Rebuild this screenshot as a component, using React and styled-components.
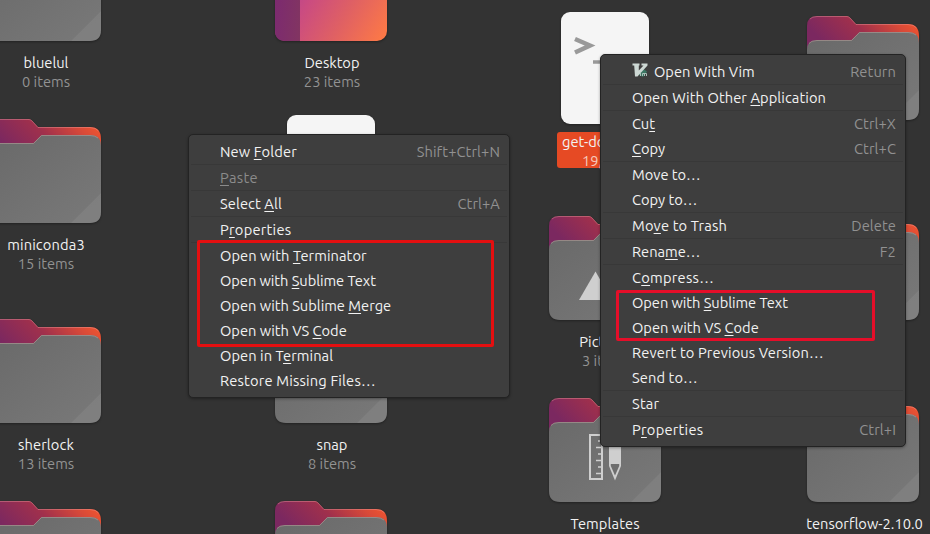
import React, { useId } from "react";
import styled, { createGlobalStyle } from "styled-components";

const GlobalStyle = createGlobalStyle`
  * { box-sizing: border-box; }
  html, body { margin: 0; background: #333333; overflow: hidden; }
`;

const Screen = styled.div`
  position: relative;
  display: flex;
  gap: 2px;
  width: 930px;
  height: 534px;
  overflow: hidden;
  background: #333333;
  font-family: Ubuntu, "Noto Sans", "Open Sans", sans-serif;
  font-size: 14.667px;
  line-height: 19px;
  color: #f2f2f2;
`;

const Pane = styled.div`
  flex: none;
  display: grid;
  grid-template-columns: repeat(2, ${(p) => p.$column}px);
  grid-template-rows: ${(p) => p.$rows};
  margin-left: ${(p) => p.$left || 0}px;
  margin-top: ${(p) => p.$top}px;
`;

const Cell = styled.div`
  display: flex;
  flex-direction: column;
  align-items: center;
`;

const Art = styled.svg`
  flex: none;
  display: block;
  width: 112px;
  height: 112px;
  overflow: visible;
  filter: drop-shadow(0 1px 1px rgba(0, 0, 0, 0.35));
`;

const Caption = styled.div`
  display: flex;
  flex-direction: column;
  align-items: center;
  height: 36px;
  margin-top: 8px;
  padding-left: ${(p) => p.$indent || 0}px;
  white-space: nowrap;
`;

const SelectedCaption = styled(Caption)`
  align-items: flex-start;
  width: 96px;
  padding: 0 0 0 5px;
  border-radius: 3px;
  background: #e64a24;
`;

const Name = styled.span`
  letter-spacing: ${(p) => p.$track || 0}px;
`;

const Detail = styled.span`
  color: #929292;

  ${SelectedCaption} & {
    padding-left: 20px;
    color: #f6cabd;
  }
`;

const Menu = styled.div`
  position: absolute;
  left: ${(p) => p.$x}px;
  top: ${(p) => p.$y}px;
  width: ${(p) => p.$width}px;
  padding: 4px 0;
  border: 1px solid #232323;
  border-radius: 5px;
  background: #3e3e3e;
  box-shadow: 0 1px 3px rgba(0, 0, 0, 0.35);
`;

const MenuRow = styled.div`
  display: flex;
  align-items: center;
  height: 25px;
  padding: 0 9px 0 31px;
  white-space: nowrap;
  color: ${(p) => (p.$disabled ? "#8b8b8b" : "#f2f2f2")};
`;

const Label = styled.span`
  letter-spacing: ${(p) => p.$track || 0}px;
`;

const Mnemonic = styled.span`
  text-decoration: underline;
  text-decoration-thickness: 1px;
  text-underline-offset: 2px;
  text-decoration-skip-ink: none;
`;

const Shortcut = styled.span`
  margin-left: auto;
  color: #919191;
  letter-spacing: 0.1px;
`;

const Separator = styled.div`
  height: 1px;
  margin: 0 2px;
  background: #383838;
`;

const Highlight = styled.div`
  position: absolute;
  left: ${(p) => p.$x}px;
  top: ${(p) => p.$y}px;
  width: ${(p) => p.$width}px;
  height: ${(p) => p.$height}px;
  border: 3px solid ${(p) => p.$color};
  border-radius: 2px;
`;

const VimMark = styled.svg`
  width: 16px;
  height: 16px;
  margin: -1px 6px 0 0;
`;

function Folder({ children }) {
  const id = useId();
  return (
    <Art viewBox="0 0 112 112">
      <defs>
        <linearGradient id={id + "b"} x1="0" y1="0.3" x2="1" y2="0">
          <stop offset="0" stopColor="#7b2860" />
          <stop offset="0.42" stopColor="#a0304c" />
          <stop offset="0.75" stopColor="#d94a38" />
          <stop offset="1" stopColor="#fa5a2c" />
        </linearGradient>
        <linearGradient id={id + "f"} x1="0" y1="0" x2="1" y2="1">
          <stop offset="0" stopColor="#696969" />
          <stop offset="1" stopColor="#797979" />
        </linearGradient>
      </defs>
      <path d="M0 38V14Q0 4 10 4H40Q41.500 4 43 5.500L49 12H101Q112 12 112 24V38Z" fill={`url(#${id}b)`} />
      <path d="M3 7Q5 4.500 10 4.500H40Q41.500 4.500 43 6L49 12.500H101Q107 12.500 109.500 16" fill="none" stroke="#f0a0a0" strokeOpacity=".4" />
      <path d="M0 38Q0 28 10 28H44.500L52.500 20H101Q112 20 112 31V97Q112 108 101 108H11Q0 108 0 97Z" fill={`url(#${id}f)`} />
      <path d="M2 31.500Q4 28.500 10 28.500H44.500L52.500 20.500H101Q106 20.500 109 23" fill="none" stroke="#c0a5a0" strokeOpacity=".5" />
      <path d="M82 108L112 78V97Q112 108 101 108Z" fill="#fff" fillOpacity=".06" />
      {children}
    </Art>
  );
}

function DesktopIcon() {
  const id = useId();
  return (
    <Art viewBox="0 0 112 112">
      <defs>
        <linearGradient id={id} x1="0" y1="0.35" x2="1" y2="0.9">
          <stop offset="0" stopColor="#a63b9b" />
          <stop offset="0.35" stopColor="#cb4c80" />
          <stop offset="0.65" stopColor="#df6064" />
          <stop offset="1" stopColor="#fc7847" />
        </linearGradient>
        <linearGradient id={id + "s"} x1="0" y1="0.6" x2="1" y2="1">
          <stop offset="0" stopColor="#7c2a70" />
          <stop offset="1" stopColor="#823561" />
        </linearGradient>
      </defs>
      <rect y="4" width="112" height="104" rx="10" fill={`url(#${id})`} />
      <path d="M25 4V108H10Q0 108 0 97V14Q0 4 10 4Z" fill={`url(#${id}s)`} />
    </Art>
  );
}

function FileIcon({ prompt }) {
  return (
    <Art viewBox="0 0 112 112">
      <rect x="12" width="88" height="112" rx="9" fill="#f5f5f5" />
      {prompt && (
        <g fill="none" stroke="#999" strokeWidth="4.500">
          <path d="M26 27L41 33.500L26 40.500" />
          <path d="M44 50H60" strokeWidth="3.500" />
        </g>
      )}
    </Art>
  );
}

const TemplatesGlyph = () => (
  <g>
    <path d="M41 41H53V85H41Z" fill="none" stroke="#cfcfcf" strokeWidth="2" />
    <path d="M49 47H53M47 53.500H53M49 60H53M47 66.500H53M49 73H53M47 79.500H53" stroke="#cfcfcf" strokeWidth="1.500" />
    <path d="M60 45Q60 39 66 39Q72 39 72 45V72L66 86.500L60 72Z" fill="#cfcfcf" />
    <path d="M61.800 70H70.200V72L66 81.500L61.800 72Z" fill="#6e6e6e" />
  </g>
);

const ICONS = {
  folder: () => <Folder />,
  desktop: () => <DesktopIcon />,
  file: () => <FileIcon />,
  script: () => <FileIcon prompt />,
  pictures: () => (
    <Folder>
      <path d="M30 88L46.500 59.500L63 88Z" fill="#cfcfcf" />
    </Folder>
  ),
  templates: () => (
    <Folder>
      <TemplatesGlyph />
    </Folder>
  ),
};

const HOME = [
  { icon: "folder", name: "bluelul", detail: "0 items" },
  { icon: "desktop", name: "Desktop", detail: "23 items" },
  { icon: "folder", name: "miniconda3", detail: "15 items", track: 0.15 },
  { icon: "file" },
  { icon: "folder", name: "sherlock", detail: "13 items", track: 0.1 },
  { icon: "folder", name: "snap", detail: "8 items" },
  { icon: "folder" },
  { icon: "folder" },
];

const FILES = [
  { icon: "script", name: "get-do", detail: "19,", selected: true },
  { icon: "folder" },
  { icon: "pictures", name: "Pictures", detail: "3 items", indent: 2 },
  { icon: "folder" },
  { icon: "templates", name: "Templates", track: 0.1 },
  { icon: "folder", name: "tensorflow-2.10.0", indent: 3 },
];

// An underscore precedes each mnemonic letter; "-" is a separator.
const FOLDER_MENU = [
  { label: "New _Folder", keys: "Shift+Ctrl+N", track: 0.12 },
  "-",
  { label: "_Paste", disabled: true, track: 0.3 },
  "-",
  { label: "Select _All", keys: "Ctrl+A", track: 0.1 },
  "-",
  { label: "P_roperties", track: 0.25 },
  "-",
  { label: "Open with _Terminator", track: 0.07 },
  { label: "Open with _Sublime Text", track: -0.05 },
  { label: "Open with Sublime _Merge" },
  { label: "Open with VS _Code" },
  { label: "Open in T_erminal", track: 0.06 },
  { label: "Restore Missing Files…", track: 0.18 },
];

const FILE_MENU = [
  { label: "Open With Vim", keys: "Return", vim: true },
  "-",
  { label: "Open With Other _Application", track: 0.08 },
  "-",
  { label: "Cu_t", keys: "Ctrl+X" },
  { label: "_Copy", keys: "Ctrl+C" },
  "-",
  { label: "Move to…" },
  { label: "Copy to…" },
  "-",
  { label: "Mo_ve to Trash", keys: "Delete", track: 0.16 },
  "-",
  { label: "Rena_me…", keys: "F2" },
  "-",
  { label: "C_ompress…", track: 0.25 },
  { label: "Open with _Sublime Text", track: -0.05 },
  { label: "Open with VS _Code" },
  { label: "Revert to Previous Version…", track: 0.12 },
  { label: "Send to…", track: 0.1 },
  "-",
  { label: "Star", track: 0.2 },
  "-",
  { label: "P_roperties", keys: "Ctrl+I", track: 0.25 },
];

function MenuLabel({ text, track }) {
  const at = text.indexOf("_");
  if (at < 0) return <Label $track={track}>{text}</Label>;
  return (
    <Label $track={track}>
      {text.slice(0, at)}
      <Mnemonic>{text[at + 1]}</Mnemonic>
      {text.slice(at + 2)}
    </Label>
  );
}

function VimIcon() {
  return (
    <VimMark viewBox="0 0 16 16">
      <path d="M10 5L15 8.500L11 14L7 12Z" fill="#3a7562" />
      <path d="M0.500 0.500H7.500V2.500H6.800V7.500L11.500 2.500H9.500V0.500H15.500V2.500L5.500 13.500H3L2.200 2.500H0.500Z" fill="#cdd8d4" />
      <path d="M8.500 9.500V13M10.500 13V10.500H14.500V13M12.500 10.500V13" fill="none" stroke="#a9bfb7" />
    </VimMark>
  );
}

function ContextMenu({ items, x, y, width }) {
  return (
    <Menu $x={x} $y={y} $width={width}>
      {items.map((item, i) =>
        item === "-" ? (
          <Separator key={i} />
        ) : (
          <MenuRow key={i} $disabled={item.disabled}>
            {item.vim && <VimIcon />}
            <MenuLabel text={item.label} track={item.track} />
            {item.keys && <Shortcut>{item.keys}</Shortcut>}
          </MenuRow>
        )
      )}
    </Menu>
  );
}

function IconGrid({ items, indent = 0, ...layout }) {
  return (
    <Pane {...layout}>
      {items.map((item, i) => {
        const Box = item.selected ? SelectedCaption : Caption;
        return (
          <Cell key={i}>
            {ICONS[item.icon]()}
            {item.name && (
              <Box $indent={item.indent ?? indent}>
                <Name $track={item.track}>{item.name}</Name>
                {item.detail && <Detail>{item.detail}</Detail>}
              </Box>
            )}
          </Cell>
        );
      })}
    </Pane>
  );
}

export default function App() {
  return (
    <>
      <GlobalStyle />
      <Screen>
        <IconGrid items={HOME} indent={2} $column={286} $rows="182px 200px 182px 182px" $left={-98} $top={-67} />
        <IconGrid items={FILES} $column={258} $rows="200px 182px 182px" $top={12} />
        <ContextMenu items={FOLDER_MENU} x={188} y={134} width={322} />
        <ContextMenu items={FILE_MENU} x={600} y={54} width={306} />
        <Highlight $x={197} $y={240} $width={297} $height={107} $color="#e40f10" />
        <Highlight $x={616} $y={290} $width={259} $height={51} $color="#e50e29" />
      </Screen>
    </>
  );
}
